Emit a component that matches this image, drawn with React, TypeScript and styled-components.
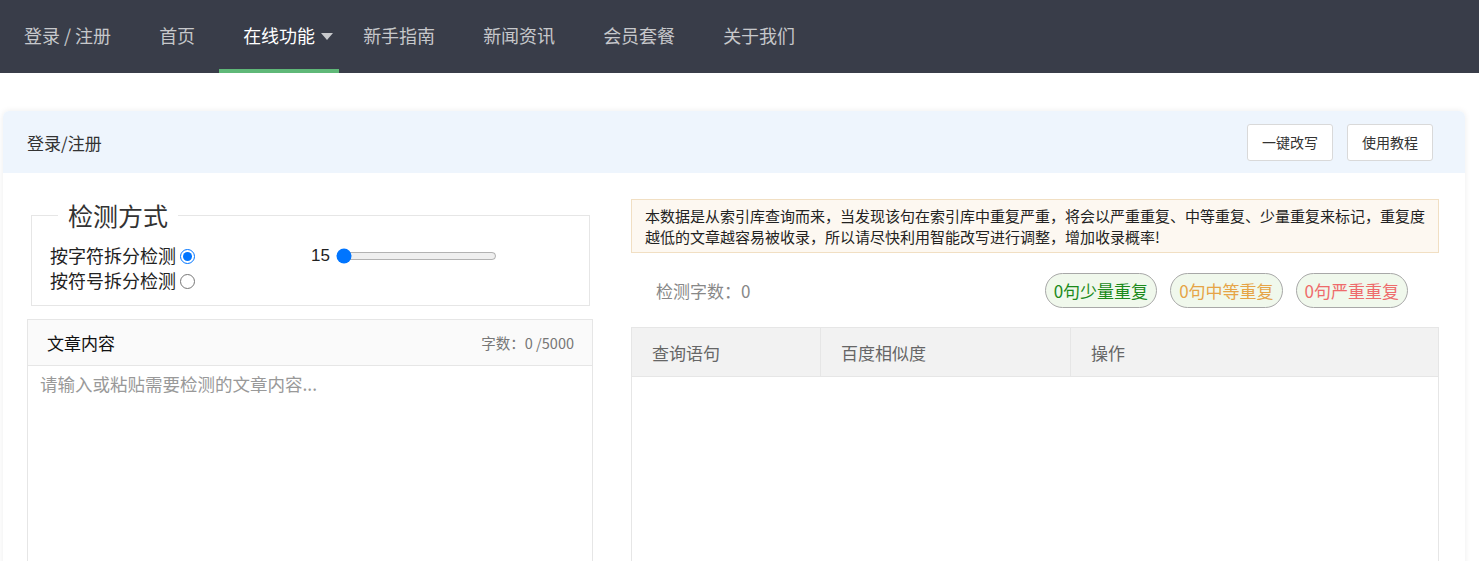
import React from "react";
import styled, { createGlobalStyle } from "styled-components";

const GlobalStyle = createGlobalStyle`
  html, body {
    margin: 0;
    padding: 0;
    background: #fff;
    overflow: hidden;
  }
  body {
    font-family: "Noto Sans CJK SC", "Liberation Sans", sans-serif;
    color: #333;
  }
  * {
    box-sizing: border-box;
  }
`;

const NavBar = styled.nav`
  height: 73px;
  background: #393d49;
  display: flex;
`;

const NavItem = styled.a<{ $active?: boolean }>`
  position: relative;
  display: flex;
  align-items: center;
  padding: 0 24px 3px;
  font-size: 18px;
  color: ${(p) => (p.$active ? "#fff" : "rgba(255,255,255,0.72)")};
  text-decoration: none;
  white-space: nowrap;

  &::after {
    content: "";
    position: absolute;
    left: 0;
    right: 0;
    bottom: 0;
    height: 4px;
    background: ${(p) => (p.$active ? "#5fb878" : "transparent")};
  }
`;

const Caret = styled.span`
  position: absolute;
  right: 6px;
  top: 33px;
  border-left: 6.5px solid transparent;
  border-right: 6.5px solid transparent;
  border-top: 7px solid rgba(255, 255, 255, 0.72);
`;

const Page = styled.div`
  padding: 38px 0 0 3px;
`;

const Card = styled.section`
  width: 1462px;
  background: #fff;
  border-radius: 6px;
  box-shadow: 0 0 6px rgba(0, 0, 0, 0.08);
  overflow: hidden;
`;

const CardHead = styled.header`
  height: 62px;
  background: #eef5fd;
  display: flex;
  align-items: center;
  justify-content: space-between;
  padding: 0 32px 0 24px;
  font-size: 17px;
  color: #333;
`;

const HeadActions = styled.div`
  display: flex;
  gap: 14px;
`;

const Button = styled.button`
  height: 37px;
  width: 86px;
  padding: 0;
  border: 1px solid #d9d9d9;
  border-radius: 3px;
  background: #fff;
  font-family: inherit;
  font-size: 14px;
  color: #333;
`;

const CardBody = styled.div`
  display: grid;
  grid-template-columns: 566px 808px;
  column-gap: 38px;
  padding: 26px 26px 0 24px;
`;

const Column = styled.div`
  display: flex;
  flex-direction: column;
`;

const Fieldset = styled.fieldset`
  margin: 0 3px 0 4px;
  border: 1px solid #e6e6e6;
  padding: 12px 18px 12px;
`;

const Legend = styled.legend`
  margin-left: 8px;
  padding: 0 10px;
  font-size: 25px;
  line-height: 32px;
  color: #333;
`;

const OptionRow = styled.div`
  display: grid;
  grid-template-columns: 261px auto;
  align-items: center;
  height: 25px;
`;

const RadioLabel = styled.label`
  display: flex;
  align-items: center;
  font-size: 18px;
  line-height: 25px;
  color: #222;

  input {
    margin: 2px 0 0 4px;
    width: 15px;
    height: 15px;
  }
`;

const SliderBox = styled.div`
  display: flex;
  align-items: center;
  font-family: "Liberation Sans", sans-serif;
  font-size: 17px;
  color: #222;

  input {
    width: 161px;
    margin: 0 0 0 6px;
  }
`;

const Editor = styled.div`
  margin-top: 13px;
  border: 1px solid #e6e6e6;
`;

const EditorHead = styled.div`
  height: 46px;
  display: flex;
  align-items: center;
  justify-content: space-between;
  padding: 0 18px 0 19px;
  background: #fafafa;
  border-bottom: 1px solid #e6e6e6;
  font-size: 17px;
  color: #111;
`;

const WordCount = styled.span`
  font-size: 14.5px;
  color: #777;
`;

const TextArea = styled.textarea`
  display: block;
  width: 100%;
  height: 260px;
  border: none;
  outline: none;
  resize: none;
  padding: 5px 12px;
  font-family: inherit;
  font-size: 17.5px;
  line-height: 26px;
  color: #333;

  &::placeholder {
    color: #999;
  }
`;

const Notice = styled.div`
  padding: 5px 12px 5px 13px;
  background: #fdf8f1;
  border: 1px solid #f1dfc3;
  font-size: 15px;
  line-height: 21px;
  color: #222;
`;

const StatsRow = styled.div`
  display: flex;
  align-items: center;
  justify-content: space-between;
  margin: 20px 0 19px;
  padding: 0 31px 0 25px;
  height: 35px;
`;

const CountText = styled.span`
  font-size: 17px;
  color: #888;
`;

const Pills = styled.div`
  display: flex;
  gap: 13px;
`;

const Pill = styled.span<{ $color: string }>`
  display: flex;
  align-items: center;
  height: 35px;
  padding: 0 8px;
  border: 1px solid #a8a8a8;
  border-radius: 18px;
  background: #f0f8ec;
  font-size: 17px;
  color: ${(p) => p.$color};
`;

const Table = styled.table`
  width: 100%;
  border-collapse: collapse;
  border: 1px solid #e6e6e6;
  table-layout: fixed;
`;

const Th = styled.th`
  height: 49px;
  padding: 0 0 0 20px;
  background: #f2f2f2;
  border: 1px solid #e6e6e6;
  text-align: left;
  font-weight: 400;
  font-size: 17px;
  color: #666;
`;

const EmptyCell = styled.td`
  height: 260px;
  background: #fff;
`;

const navItems = ["首页"];
const moreItems = ["新手指南", "新闻资讯", "会员套餐", "关于我们"];

export default function App() {
  return (
    <>
      <GlobalStyle />
      <NavBar>
        <NavItem>登录 / 注册</NavItem>
        {navItems.map((n) => (
          <NavItem key={n}>{n}</NavItem>
        ))}
        <NavItem $active>
          在线功能
          <Caret />
        </NavItem>
        {moreItems.map((n) => (
          <NavItem key={n}>{n}</NavItem>
        ))}
      </NavBar>

      <Page>
        <Card>
          <CardHead>
            <span>登录/注册</span>
            <HeadActions>
              <Button>一键改写</Button>
              <Button>使用教程</Button>
            </HeadActions>
          </CardHead>

          <CardBody>
            <Column>
              <Fieldset>
                <Legend>检测方式</Legend>
                <OptionRow>
                  <RadioLabel>
                    按字符拆分检测
                    <input type="radio" name="mode" defaultChecked />
                  </RadioLabel>
                  <SliderBox>
                    15
                    <input type="range" min={15} max={100} defaultValue={15} />
                  </SliderBox>
                </OptionRow>
                <OptionRow>
                  <RadioLabel>
                    按符号拆分检测
                    <input type="radio" name="mode" />
                  </RadioLabel>
                </OptionRow>
              </Fieldset>

              <Editor>
                <EditorHead>
                  <span>文章内容</span>
                  <WordCount>字数：0 /5000</WordCount>
                </EditorHead>
                <TextArea placeholder="请输入或粘贴需要检测的文章内容..." />
              </Editor>
            </Column>

            <Column>
              <Notice>
                本数据是从索引库查询而来，当发现该句在索引库中重复严重，将会以严重重复、中等重复、少量重复来标记，重复度越低的文章越容易被收录，所以请尽快利用智能改写进行调整，增加收录概率!
              </Notice>

              <StatsRow>
                <CountText>检测字数：0</CountText>
                <Pills>
                  <Pill $color="#1b8a1b">0句少量重复</Pill>
                  <Pill $color="#e6a446">0句中等重复</Pill>
                  <Pill $color="#ee6b6b">0句严重重复</Pill>
                </Pills>
              </StatsRow>

              <Table>
                <colgroup>
                  <col style={{ width: 189 }} />
                  <col style={{ width: 250 }} />
                  <col />
                </colgroup>
                <thead>
                  <tr>
                    <Th>查询语句</Th>
                    <Th>百度相似度</Th>
                    <Th>操作</Th>
                  </tr>
                </thead>
                <tbody>
                  <tr>
                    <EmptyCell colSpan={3} />
                  </tr>
                </tbody>
              </Table>
            </Column>
          </CardBody>
        </Card>
      </Page>
    </>
  );
}
